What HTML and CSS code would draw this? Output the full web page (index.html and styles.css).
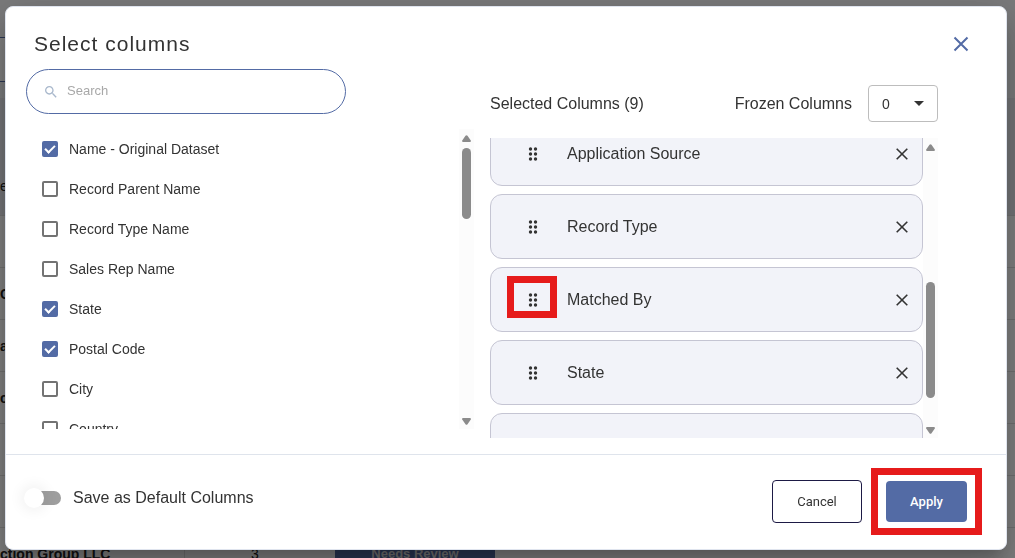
FILE: index.html
```
<!DOCTYPE html>
<html lang="en">
<head>
<meta charset="UTF-8">
<meta name="viewport" content="width=device-width, initial-scale=1.0">
<title>Select columns</title>
<link rel="stylesheet" href="styles.css">
</head>
<body>

<!-- Page behind the dialog -->
<div class="page" aria-hidden="true">
    <div class="toolbar"><div class="filter"></div></div>
    <div class="table-head">e</div>
    <div class="row"></div>
    <div class="row"><b>C</b></div>
    <div class="row"><b>a</b></div>
    <div class="row"><b>c</b></div>
    <div class="row"></div>
    <div class="row"></div>
    <div class="row">
        <b class="name">ction Group LLC</b>
        <span class="count">3</span>
        <span class="status">Needs Review</span>
    </div>
</div>

<div class="overlay">
    <div class="dialog" role="dialog" aria-labelledby="title">
        <div class="dialog-header">
            <h1 id="title">Select columns</h1>
            <button class="close" aria-label="Close">
                <svg width="16" height="16" viewBox="0 0 16 16"><path d="M1.5 1.5l13 13M14.5 1.5l-13 13"/></svg>
            </button>
        </div>

        <div class="dialog-body">
            <div class="available">
                <div class="search">
                    <svg width="16" height="16" viewBox="0 0 24 24"><path d="M15.5 14h-.79l-.28-.27C15.41 12.59 16 11.11 16 9.5 16 5.91 13.09 3 9.5 3S3 5.91 3 9.5 5.91 16 9.5 16c1.61 0 3.09-.59 4.23-1.57l.27.28v.79l5 4.99L20.49 19l-4.99-5zm-6 0C7.01 14 5 11.99 5 9.5S7.01 5 9.5 5 14 7.01 14 9.5 11.99 14 9.5 14z"/></svg>
                    <input type="text" placeholder="Search" aria-label="Search">
                </div>
                <div class="scroll-area">
                    <div class="options">
                        <label class="option"><input type="checkbox" checked>Name - Original Dataset</label>
                        <label class="option"><input type="checkbox">Record Parent Name</label>
                        <label class="option"><input type="checkbox">Record Type Name</label>
                        <label class="option"><input type="checkbox">Sales Rep Name</label>
                        <label class="option"><input type="checkbox" checked>State</label>
                        <label class="option"><input type="checkbox" checked>Postal Code</label>
                        <label class="option"><input type="checkbox">City</label>
                        <label class="option"><input type="checkbox">Country</label>
                    </div>
                    <div class="scrollbar">
                        <svg width="9" height="7" viewBox="0 0 9 7"><path d="M3.5.8Q4.5-.4 5.5.8L8.8 5.4Q9.2 7 8 7H1Q-.2 7 .2 5.4z"/></svg>
                        <div class="track"><div class="thumb" style="height: 27%"></div></div>
                        <svg width="9" height="7" viewBox="0 0 9 7"><path d="M3.5 6.2Q4.5 7.4 5.5 6.2L8.8 1.6Q9.2 0 8 0H1Q-.2 0 .2 1.6z"/></svg>
                    </div>
                </div>
            </div>

            <div class="selected">
                <div class="selected-header">
                    <span>Selected Columns (9)</span>
                    <label class="frozen">Frozen Columns
                        <span class="select-box">
                            <select>
                                <option>0</option>
                                <option>1</option>
                                <option>2</option>
                            </select>
                            <svg width="10" height="5" viewBox="0 0 10 5"><path d="M0 0h10L5 5z"/></svg>
                        </span>
                    </label>
                </div>
                <div class="scroll-area">
                    <div class="cards" id="cards">
                        <div class="card">
                            <svg class="grip" width="10" height="14" viewBox="0 0 10 14"><circle cx="2.5" cy="2" r="1.7"/><circle cx="7.5" cy="2" r="1.7"/><circle cx="2.5" cy="7" r="1.7"/><circle cx="7.5" cy="7" r="1.7"/><circle cx="2.5" cy="12" r="1.7"/><circle cx="7.5" cy="12" r="1.7"/></svg>
                            <span class="card-name">Application Source</span>
                            <button class="remove" aria-label="Remove Application Source"><svg width="12" height="12" viewBox="0 0 12 12"><path d="M.7.7l10.6 10.6M11.3.7L.7 11.3"/></svg></button>
                        </div>
                        <div class="card">
                            <svg class="grip" width="10" height="14" viewBox="0 0 10 14"><circle cx="2.5" cy="2" r="1.7"/><circle cx="7.5" cy="2" r="1.7"/><circle cx="2.5" cy="7" r="1.7"/><circle cx="7.5" cy="7" r="1.7"/><circle cx="2.5" cy="12" r="1.7"/><circle cx="7.5" cy="12" r="1.7"/></svg>
                            <span class="card-name">Record Type</span>
                            <button class="remove" aria-label="Remove Record Type"><svg width="12" height="12" viewBox="0 0 12 12"><path d="M.7.7l10.6 10.6M11.3.7L.7 11.3"/></svg></button>
                        </div>
                        <div class="card marked">
                            <svg class="grip" width="10" height="14" viewBox="0 0 10 14"><circle cx="2.5" cy="2" r="1.7"/><circle cx="7.5" cy="2" r="1.7"/><circle cx="2.5" cy="7" r="1.7"/><circle cx="7.5" cy="7" r="1.7"/><circle cx="2.5" cy="12" r="1.7"/><circle cx="7.5" cy="12" r="1.7"/></svg>
                            <span class="card-name">Matched By</span>
                            <button class="remove" aria-label="Remove Matched By"><svg width="12" height="12" viewBox="0 0 12 12"><path d="M.7.7l10.6 10.6M11.3.7L.7 11.3"/></svg></button>
                        </div>
                        <div class="card">
                            <svg class="grip" width="10" height="14" viewBox="0 0 10 14"><circle cx="2.5" cy="2" r="1.7"/><circle cx="7.5" cy="2" r="1.7"/><circle cx="2.5" cy="7" r="1.7"/><circle cx="7.5" cy="7" r="1.7"/><circle cx="2.5" cy="12" r="1.7"/><circle cx="7.5" cy="12" r="1.7"/></svg>
                            <span class="card-name">State</span>
                            <button class="remove" aria-label="Remove State"><svg width="12" height="12" viewBox="0 0 12 12"><path d="M.7.7l10.6 10.6M11.3.7L.7 11.3"/></svg></button>
                        </div>
                        <div class="card"></div>
                    </div>
                    <div class="scrollbar">
                        <svg width="9" height="7" viewBox="0 0 9 7"><path d="M3.5.8Q4.5-.4 5.5.8L8.8 5.4Q9.2 7 8 7H1Q-.2 7 .2 5.4z"/></svg>
                        <div class="track"><div class="thumb" style="height: 44%; margin-top: 125px"></div></div>
                        <svg width="9" height="7" viewBox="0 0 9 7"><path d="M3.5 6.2Q4.5 7.4 5.5 6.2L8.8 1.6Q9.2 0 8 0H1Q-.2 0 .2 1.6z"/></svg>
                    </div>
                </div>
            </div>
        </div>

        <div class="dialog-footer">
            <label class="default-toggle"><input type="checkbox" role="switch">Save as Default Columns</label>
            <button class="btn btn-cancel">Cancel</button>
            <button class="btn btn-apply">Apply</button>
        </div>
    </div>
</div>

<script>
    // Keep the list part way down
    document.getElementById('cards').scrollTop = 17;
</script>

</body>
</html>
```

FILE: styles.css
```
*, *::before, *::after {
    box-sizing: border-box;
}
body {
    margin: 0;
    height: 100vh;
    overflow: hidden;
    font-family: Arial, "Liberation Sans", sans-serif;
    font-size: 16px;
    color: #333;
}
button {
    font-family: inherit;
    cursor: pointer;
}

/* Page behind */
.page {
    font-size: 14px;
    color: #222;
    background: #fff;
}
.toolbar {
    height: 98px;
    padding-top: 37px;
    background: #f4f5f7;
}
.filter {
    height: 45px;
    width: 320px;
    border: 1px solid #536ba5;
    border-left: none;
    background: #fff;
}
.table-head {
    height: 117px;
    padding-top: 80px;
    background: #e8e9ee;
}
.row {
    display: flex;
    align-items: center;
    height: 52px;
    border-top: 1px solid #e0e0e0;
}
.name {
    width: 185px;
    line-height: 52px;
    border-right: 1px solid #e0e0e0;
}
.count {
    width: 140px;
    text-align: center;
}
.status {
    width: 160px;
    margin-left: 10px;
    line-height: 32px;
    border-radius: 4px;
    background: #536ba5;
    color: #ddd;
    font-size: 13px;
    font-weight: bold;
    text-align: center;
}

/* Dialog */
.overlay {
    position: fixed;
    inset: 0;
    display: flex;
    padding: 6px 8px 8px 5px;
    background: rgba(0, 0, 0, 0.5);
}
.dialog {
    flex: 1;
    display: flex;
    flex-direction: column;
    border: 1px solid #dfe4ee;
    border-radius: 8px;
    background: #fff;
    box-shadow: 0 11px 15px -7px rgba(0,0,0,0.2), 0 24px 38px 3px rgba(0,0,0,0.14), 0 9px 46px 8px rgba(0,0,0,0.12);
}
.dialog-header {
    display: flex;
    align-items: center;
    justify-content: space-between;
    height: 62px;
    padding: 12px 37px 0 28px;
}
.dialog-header h1 {
    margin: 0;
    font-size: 21px;
    font-weight: normal;
    letter-spacing: 1px;
}
.close, .remove {
    display: flex;
    padding: 0;
    border: none;
    background: none;
}
.close svg {
    stroke: #536ba5;
    stroke-width: 2;
}
.remove svg {
    stroke: #333;
    stroke-width: 1.6;
}
.dialog-body {
    flex: 1;
    display: grid;
    grid-template-columns: 1fr 1fr;
    gap: 16px;
    padding: 0 68px 16px 20px;
}

/* Available columns */
.search {
    display: flex;
    align-items: center;
    gap: 8px;
    width: 320px;
    height: 45px;
    margin-bottom: 15px;
    padding: 0 16px;
    border: 1px solid #536ba5;
    border-radius: 23px;
}
.search svg {
    fill: #a9b8cc;
}
.search input {
    flex: 1;
    min-width: 0;
    padding: 0 0 2px;
    border: none;
    outline: none;
    font-family: inherit;
    font-size: 13px;
}
.search input::placeholder {
    color: #a8a8a8;
}
.scroll-area {
    display: flex;
    height: 300px;
}
.options, .cards {
    flex: 1;
    overflow: hidden;
}
.option {
    display: flex;
    align-items: center;
    gap: 11px;
    height: 40px;
    padding-left: 16px;
    font-size: 14px;
}
.option input {
    appearance: none;
    width: 16px;
    height: 16px;
    margin: 0;
    border: 2px solid #737373;
    border-radius: 2px;
}
.option input:checked {
    border-color: #536ba5;
    background: #536ba5;
}
.option input:checked::before {
    content: "";
    display: block;
    width: 6px;
    height: 10px;
    margin-left: 3px;
    border: solid #fff;
    border-width: 0 2px 2px 0;
    transform: rotate(45deg);
}
.scrollbar {
    display: flex;
    flex-direction: column;
    align-items: center;
    gap: 6px;
    width: 15px;
    padding: 6px 0 4px;
    background: #fcfcfc;
}
.scrollbar svg {
    fill: #8b8b8b;
}
.track {
    flex: 1;
}
.thumb {
    width: 9px;
    border-radius: 5px;
    background: #8b8b8b;
}

/* Selected columns */
.selected-header {
    display: flex;
    align-items: center;
    justify-content: space-between;
    height: 69px;
}
.frozen {
    display: flex;
    align-items: center;
    gap: 16px;
}
.select-box {
    display: flex;
    position: relative;
}
.select-box select {
    appearance: none;
    width: 70px;
    height: 37px;
    padding: 0 13px;
    border: 1px solid #bdbdbd;
    border-radius: 4px;
    background: #fff;
    color: #333;
    font-family: inherit;
    font-size: 14px;
}
.select-box svg {
    position: absolute;
    right: 14px;
    top: 16px;
    fill: #333;
    pointer-events: none;
}
.card {
    display: flex;
    align-items: center;
    height: 65px;
    margin-bottom: 8px;
    padding: 0 14px 0 37px;
    border: 1px solid #c5c5d3;
    border-radius: 12px;
    background: #f2f3f9;
}
.card-name {
    flex: 1;
    margin-left: 29px;
}
.grip {
    fill: #333;
}
.marked, .btn-apply {
    position: relative;
}
/* Red call-out frames */
.marked::before, .btn-apply::after {
    content: "";
    position: absolute;
    border: 7px solid #e61b1b;
}
.marked::before {
    left: 16px;
    top: 8px;
    width: 50px;
    height: 42px;
}
.btn-apply::after {
    inset: -13px -15px;
}

/* Footer */
.dialog-footer {
    display: flex;
    align-items: center;
    height: 95px;
    padding: 0 39px 2px 21px;
    border-top: 1px solid #dfe4ec;
}
.default-toggle {
    display: flex;
    align-items: center;
    gap: 12px;
    margin-right: auto;
    padding-bottom: 6px;
}
.default-toggle input {
    appearance: none;
    width: 34px;
    height: 14px;
    margin: 0;
    border-radius: 7px;
    background: #9e9e9e;
}
.default-toggle input::before {
    content: "";
    display: block;
    width: 20px;
    height: 20px;
    margin: -3px 0 0 -3px;
    border-radius: 50%;
    background: #fff;
    box-shadow: 0 0 14px 3px rgba(0,0,0,0.06);
}
.btn {
    height: 43px;
    border-radius: 4px;
    font-family: Roboto, sans-serif;
    font-size: 13px;
}
.btn-cancel {
    width: 90px;
    margin-right: 24px;
    border: 1px solid #1d1a45;
    background: #fff;
    color: #333;
}
.btn-apply {
    width: 81px;
    height: 41px;
    border: none;
    background: #536ba5;
    color: #fff;
    font-weight: 500;
}
```
